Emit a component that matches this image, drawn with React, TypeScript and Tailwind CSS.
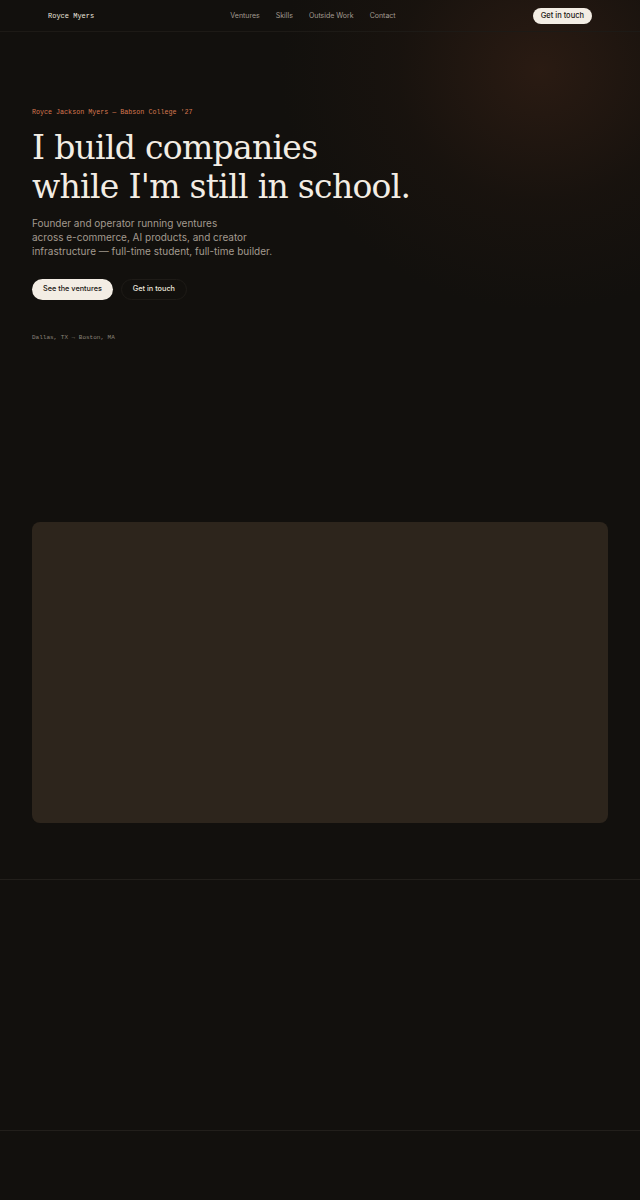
import React from "react";

const mono = { fontFamily: '"Liberation Mono", "DejaVu Sans Mono", monospace' };

export default function App() {
  return (
    <div className="relative min-h-[1200px] w-full overflow-hidden bg-[#12100d] font-['Inter',sans-serif] text-[#f3ede4]">
      {/* top-right glow */}
      <div className="pointer-events-none absolute left-[280px] top-[-170px] h-[480px] w-[520px] rounded-full bg-[radial-gradient(closest-side,rgba(58,34,22,0.6),rgba(38,24,16,0.3)_55%,transparent)]" />

      <header className="relative flex h-[32px] items-center justify-between border-b border-[#1d1a16] px-[48px]">
        <span className="pt-[1px] text-[7px] text-[#ece6dd]" style={mono}>Royce Myers</span>
        <nav className="absolute left-[calc(50%-7px)] top-1/2 flex -translate-x-1/2 -translate-y-1/2 gap-[16px] pt-[1px] text-[7px] text-[#a39b91]">
          <span>Ventures</span>
          <span>Skills</span>
          <span>Outside Work</span>
          <span>Contact</span>
        </nav>
        <button className="h-[16px] rounded-full bg-[#f3ede4] px-[8px] text-[7.5px] font-medium text-[#1a1612]">
          Get in touch
        </button>
      </header>

      <section className="relative px-[32px] pt-[75px]">
        <p className="text-[6.7px] text-[#d5774f]" style={mono}>Royce Jackson Myers — Babson College '27</p>
        <h1 className="mt-[11px] font-['DejaVu_Serif',serif] text-[33px] leading-[39px] tracking-[-0.7px] text-[#f3ede4]">
          I build companies
          <br />
          while I'm still in school.
        </h1>
        <p className="mt-[10px] w-[260px] text-[10px] leading-[14px] text-[#a39a8f]">
          Founder and operator running ventures
          <br />
          across e-commerce, AI products, and creator
          <br />
          infrastructure — full-time student, full-time builder.
        </p>
        <div className="mt-[21px] flex gap-[8px]">
          <button className="h-[21px] rounded-full bg-[#f3ede4] px-[11px] text-[7.3px] font-medium text-[#1a1612]">
            See the ventures
          </button>
          <button className="h-[21px] rounded-full border border-[#1e1b17] px-[11px] text-[7.3px] font-medium text-[#ece6dd]">
            Get in touch
          </button>
        </div>
        <p className="mt-[33px] text-[6px] text-[#8a8278]" style={mono}>Dallas, TX → Boston, MA</p>
      </section>

      <div className="relative px-[32px] pt-[180px]">
        <div className="h-[301px] rounded-[8px] bg-[#2d251c]" />
      </div>

      <div className="mt-[56px] h-[251px] border-t border-[#221f1b]" />
      <div className="border-t border-[#221f1b]" />
    </div>
  );
}
